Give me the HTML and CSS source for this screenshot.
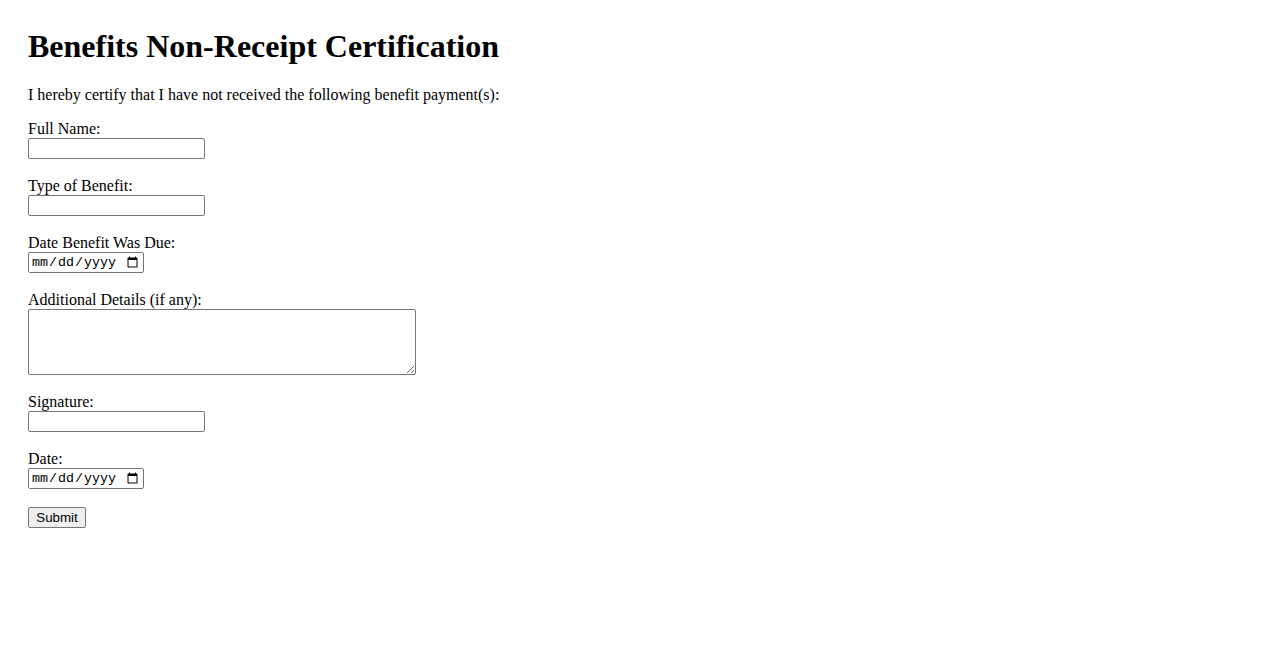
FILE: index.html
```html
<!DOCTYPE html>
<html>
<head>
<meta charset="utf-8">
<title>Benefits Non-Receipt Certification</title>
<link rel="stylesheet" href="styles.css">
</head>
<body class="page">
<h1 class="title">Benefits Non-Receipt Certification</h1>
<p class="intro">I hereby certify that I have not received the following benefit payment(s):</p>
<form class="form">
  <label class="label" for="name">Full Name:</label>
  <input class="text-input" type="text" id="name"><br><br>
  <label class="label" for="type">Type of Benefit:</label>
  <input class="text-input" type="text" id="type"><br><br>
  <label class="label" for="due">Date Benefit Was Due:</label>
  <input class="date-input" type="date" id="due"><br><br>
  <label class="label" for="details">Additional Details (if any):</label>
  <textarea class="area" id="details"></textarea><br><br>
  <label class="label" for="sig">Signature:</label>
  <input class="text-input" type="text" id="sig"><br><br>
  <label class="label" for="date">Date:</label>
  <input class="date-input" type="date" id="date"><br><br>
  <button class="submit" type="submit">Submit</button>
</form>
</body>
</html>
```
FILE: styles.css
```css
.page {
  margin: 28px;
  font-family: "Liberation Serif", "Times New Roman", serif;
  font-size: 16px;
  color: #000;
  background: #fff;
}
.title {
  font-size: 32px;
  font-weight: bold;
  margin: 0 0 21.44px;
}
.intro {
  margin: 16px 0;
}
.label {
  display: block;
}
.text-input {
  box-sizing: border-box;
  width: 177px;
  height: 21px;
  border: 1px solid #767676;
  border-radius: 2px;
  padding: 1px 2px;
  font-family: "Liberation Sans", Arial, sans-serif;
  font-size: 13.33px;
  margin: 0;
}
.date-input {
  box-sizing: border-box;
  width: 116px;
  height: 21px;
  border: 1px solid #767676;
  border-radius: 2px;
  padding: 1px 2px;
  font-family: "Liberation Mono", monospace;
  font-size: 13.33px;
  margin: 0;
}
.area {
  box-sizing: border-box;
  width: 388px;
  height: 66px;
  border: 1px solid #767676;
  border-radius: 2px;
  margin: 0;
  vertical-align: bottom;
  font-family: "Liberation Mono", monospace;
  font-size: 13.33px;
}
.submit {
  box-sizing: border-box;
  width: 58px;
  height: 21px;
  font-family: "Liberation Sans", Arial, sans-serif;
  font-size: 13.33px;
  border: 1px solid #767676;
  border-radius: 2px;
  background: #efefef;
  padding: 1px 6px;
  margin: 0;
}
```
